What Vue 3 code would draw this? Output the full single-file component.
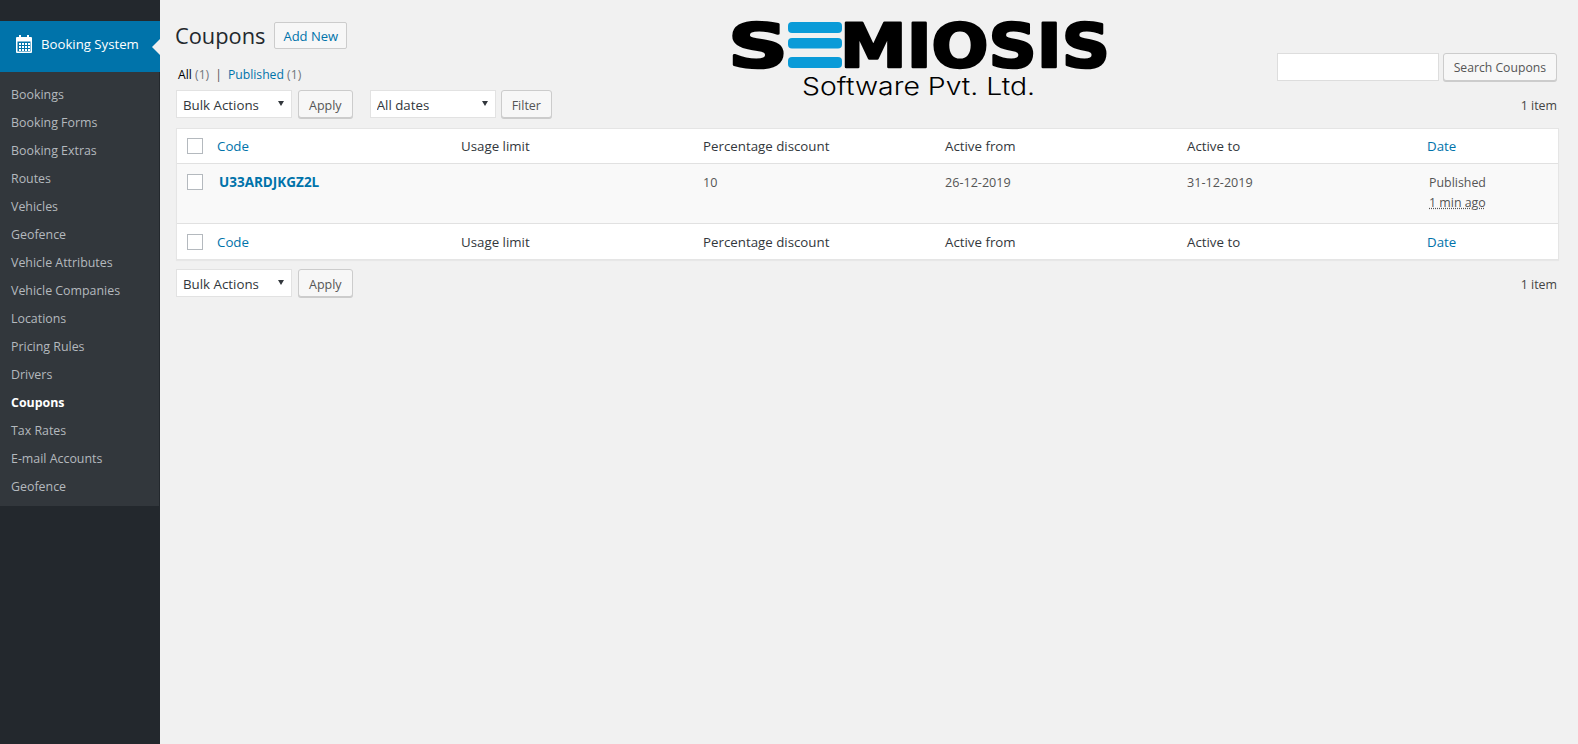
<script setup>
const menu = ['Bookings','Booking Forms','Booking Extras','Routes','Vehicles','Geofence','Vehicle Attributes','Vehicle Companies','Locations','Pricing Rules','Drivers','Coupons','Tax Rates','E-mail Accounts','Geofence']
const columns = [
  { label: 'Code', link: true },
  { label: 'Usage limit' },
  { label: 'Percentage discount' },
  { label: 'Active from' },
  { label: 'Active to' },
  { label: 'Date', link: true },
]
</script>

<template>
  <div class="page">
    <aside class="sidebar">
      <div class="gap"></div>
      <div class="current">
        <svg class="cal" viewBox="0 0 16 18" width="16" height="18" fill="#fff">
          <path fill-rule="evenodd" d="M3 0h2v2h6V0h2v2h2a1 1 0 0 1 1 1v14a1 1 0 0 1-1 1H1a1 1 0 0 1-1-1V3a1 1 0 0 1 1-1h2V0ZM1.5 6.5v10h13v-10h-13Z"/>
          <path d="M3 8h2v2H3zM6 8h2v2H6zM9 8h2v2H9zM12 8h2v2h-2zM3 11h2v2H3zM6 11h2v2H6zM9 11h2v2H9zM12 11h2v2h-2zM3 14h2v2H3zM6 14h2v2H6zM9 14h2v2H9zM12 14h2v2h-2z"/>
        </svg>
        <span>Booking System</span>
        <i class="notch"></i>
      </div>
      <ul class="submenu">
        <li v-for="(item, i) in menu" :key="i" :class="{ active: item === 'Coupons' }">{{ item }}</li>
      </ul>
    </aside>

    <main class="wrap">
      <div class="top">
        <div>
          <div class="heading">
            <h1>Coupons</h1>
            <a class="add">Add New</a>
          </div>
          <div class="views"><b>All</b> <em>(1)</em><span class="sep">|</span><a>Published</a> <em>(1)</em></div>
        </div>
        <div class="search">
          <input type="text" />
          <button>Search Coupons</button>
        </div>
      </div>

      <div class="toolbar">
        <label class="select bulk"><select><option>Bulk Actions</option></select></label>
        <button>Apply</button>
        <label class="select dates"><select><option>All dates</option></select></label>
        <button class="filter">Filter</button>
        <span class="count">1 item</span>
      </div>

      <table>
        <thead>
          <tr>
            <th class="cb"><input type="checkbox" /></th>
            <th v-for="c in columns" :key="c.label" :class="{ link: c.link }">{{ c.label }}</th>
          </tr>
        </thead>
        <tbody>
          <tr>
            <td class="cb"><input type="checkbox" /></td>
            <td class="code">U33ARDJKGZ2L</td>
            <td></td>
            <td>10</td>
            <td>26-12-2019</td>
            <td>31-12-2019</td>
            <td class="date">Published<br /><abbr>1 min ago</abbr></td>
          </tr>
        </tbody>
        <tfoot>
          <tr>
            <th class="cb"><input type="checkbox" /></th>
            <th v-for="c in columns" :key="c.label" :class="{ link: c.link }">{{ c.label }}</th>
          </tr>
        </tfoot>
      </table>

      <div class="toolbar bottom">
        <label class="select bulk"><select><option>Bulk Actions</option></select></label>
        <button>Apply</button>
        <span class="count">1 item</span>
      </div>
    </main>

    <svg class="logo" viewBox="0 -4 373 84" width="373" height="84" aria-label="Semiosis Software Pvt. Ltd.">
      <text class="word" x="-4" y="46.5" textLength="60" lengthAdjust="spacingAndGlyphs">S</text>
      <text class="word" x="108" y="46.5" textLength="270" lengthAdjust="spacingAndGlyphs">MIOSIS</text>
      <rect x="56" y="2" width="54" height="11" rx="4" fill="#0a9bd8" />
      <rect x="56" y="18" width="54" height="10.5" rx="4" fill="#0a9bd8" />
      <rect x="56" y="37" width="54" height="11" rx="4" fill="#0a9bd8" />
      <text class="sub" x="70" y="75" textLength="233" lengthAdjust="spacingAndGlyphs">Software Pvt. Ltd.</text>
    </svg>
  </div>
</template>

<style>
html, body { background: #f1f1f1; margin: 0; }
</style>

<style scoped>
.page {
  position: relative;
  display: flex;
  min-height: 744px;
  font-family: "Open Sans", "Noto Sans", sans-serif;
  font-size: 12.4px;
  color: #444;
  background: #f1f1f1;
}
.sidebar {
  width: 160px;
  flex: none;
  background: #23282d;
}
.gap { height: 21px; }
.current {
  position: relative;
  display: flex;
  align-items: center;
  gap: 9px;
  height: 51px;
  padding: 0 0 6px 16px;
  background: #0073aa;
  color: #fff;
  font-size: 13.2px;
  box-sizing: border-box;
}
.cal { flex: none; margin-top: 1px; }
.notch {
  position: absolute;
  right: 0;
  top: 18px;
  border: 8px solid transparent;
  border-left: 0;
  border-right-color: #f1f1f1;
}
.submenu {
  list-style: none;
  margin: 0;
  width: 159px;
  padding: 9px 0 5px;
  background: #32373c;
  box-sizing: border-box;
}
.submenu li {
  height: 28px;
  line-height: 28px;
  padding-left: 11px;
  color: #b4b9be;
}
.submenu li.active { color: #fff; font-weight: 700; }

.wrap {
  flex: 1;
  min-width: 0;
  padding: 22px 21px 0 16px;
}
.top {
  display: flex;
  justify-content: space-between;
  align-items: flex-start;
}
.heading {
  display: flex;
  align-items: center;
  gap: 9px;
  height: 27px;
}
h1 {
  margin: 0 0 0 -1px;
  font-size: 21.8px;
  font-weight: 400;
  color: #23282d;
}
.add {
  height: 27px;
  line-height: 26px;
  padding: 0 8px;
  box-sizing: border-box;
  border: 1px solid #ccc;
  border-radius: 2px;
  background: #f7f7f7;
  color: #0073aa;
  font-size: 13px;
}
.views {
  margin-top: 16px;
  height: 19px;
  line-height: 19px;
  padding-left: 2px;
  color: #666;
  font-size: 12.2px;
}
.views b { font-weight: 400; color: #000; }
.views em { font-style: normal; color: #72777c; }
.views a { color: #0073aa; }
.sep { margin: 0 6px; color: #555; }
.search {
  display: flex;
  gap: 4px;
  margin-top: 31px;
}
.search input {
  width: 162px;
  height: 28px;
  box-sizing: border-box;
  border: 1px solid #ddd;
  background: #fff;
  padding: 0;
}
button {
  height: 28px;
  padding: 2px 10px 0;
  box-sizing: border-box;
  border: 1px solid #ccc;
  border-radius: 3px;
  background: #f7f7f7;
  box-shadow: 0 1px 0 #ccc;
  font: 12.5px "Open Sans", "Noto Sans", sans-serif;
  color: #555;
}
.search button { font-size: 12.2px; padding-top: 0; }
.filter { margin-left: -1px; }
.toolbar {
  display: flex;
  align-items: center;
  gap: 6px;
  margin-top: 6px;
  height: 28px;
}
.toolbar.bottom { margin-top: 9px; }
.count { margin-left: auto; padding-top: 2px; }
.select {
  position: relative;
  display: block;
  height: 28px;
}
.select::after {
  content: "";
  position: absolute;
  right: 8px;
  top: 11px;
  border: 3px solid transparent;
  border-top: 5px solid #32373c;
  border-bottom: 0;
  pointer-events: none;
}
.select select {
  appearance: none;
  display: block;
  width: 100%;
  height: 28px;
  padding: 2px 0 0 6px;
  box-sizing: border-box;
  border: 1px solid #e2e2e2;
  border-radius: 0;
  background: #fff;
  font: 13.3px "Open Sans", "Noto Sans", sans-serif;
  color: #32373c;
}
.bulk { width: 116px; }
.dates { width: 126px; margin-left: 11px; }

table {
  width: 100%;
  margin-top: 10px;
  table-layout: fixed;
  border-collapse: separate;
  border-spacing: 0;
  border: 1px solid #e5e5e5;
  box-shadow: 0 1px 1px rgba(0, 0, 0, 0.04);
  background: #fff;
}
th, td {
  width: 242px;
  padding: 0 8px 0 9px;
  box-sizing: border-box;
  text-align: left;
  vertical-align: middle;
  font-weight: 400;
  font-size: 13.3px;
  color: #32373c;
}
thead th { height: 35px; border-bottom: 1px solid #e1e1e1; }
tfoot th { height: 36px; border-top: 1px solid #e1e1e1; }
th.link { color: #0073aa; padding-left: 7px; }
th:last-child, td:last-child { width: 138px; }
.cb { width: 33px; padding: 0 0 0 10px; }
tbody td {
  height: 59px;
  background: #f9f9f9;
  vertical-align: top;
  padding-top: 9px;
  line-height: 19.5px;
  font-size: 12.6px;
  color: #555;
}
tbody td.cb { padding: 10px 0 0 10px; }
td.code { font-weight: 700; font-size: 13.5px; color: #0073aa; }
td.date { font-size: 12.4px; }
abbr { text-decoration: underline dotted; }
input[type="checkbox"] {
  appearance: none;
  display: block;
  width: 16px;
  height: 16px;
  margin: 0;
  border: 1px solid #b4b9be;
  background: #fff;
}

.logo {
  position: absolute;
  left: 732px;
  top: 16px;
  overflow: visible;
}
.word {
  font-family: "DejaVu Sans", sans-serif;
  font-weight: 700;
  font-size: 60px;
  fill: #000;
  stroke: #000;
  stroke-width: 2.5px;
  stroke-linejoin: round;
}
.sub {
  font-family: Inter, "DejaVu Sans", sans-serif;
  font-weight: 300;
  font-size: 24px;
  fill: #000;
}
</style>
